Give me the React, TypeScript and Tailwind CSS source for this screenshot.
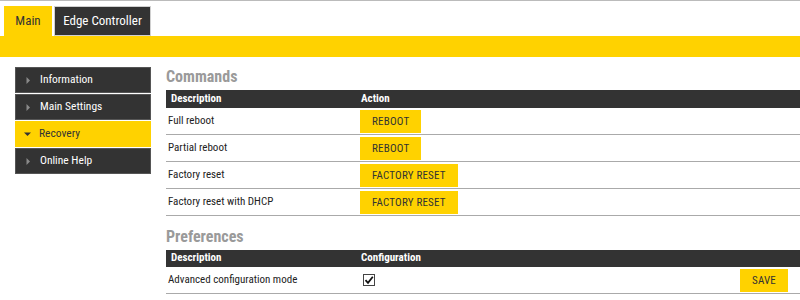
import { useState } from "react";

const font = { fontFamily: "'Roboto Condensed', Roboto, 'Liberation Sans', sans-serif" };

const menu = ["Information", "Main Settings", "Recovery", "Online Help"];

const commands = [
  { label: "Full reboot", action: "REBOOT" },
  { label: "Partial reboot", action: "REBOOT" },
  { label: "Factory reset", action: "FACTORY RESET" },
  { label: "Factory reset with DHCP", action: "FACTORY RESET" },
];

function Arrow({ open }: { open: boolean }) {
  return open ? (
    <svg width="7" height="7" viewBox="0 0 7 7" className="shrink-0">
      <path d="M0 1.5 L7 1.5 L3.5 5 Z" fill="#333" />
    </svg>
  ) : (
    <svg width="7" height="7" viewBox="0 0 7 7" className="shrink-0">
      <path d="M1.5 0 L5 3.5 L1.5 7 Z" fill="#8a8a8a" />
    </svg>
  );
}

function YellowButton({ children }: { children: React.ReactNode }) {
  return (
    <button className="h-[23px] px-[12px] bg-[#ffd200] text-[#333] text-[11px] tracking-[0.2px] leading-none">
      {children}
    </button>
  );
}

export default function App() {
  const [active, setActive] = useState("Recovery");
  const [advanced, setAdvanced] = useState(true);

  return (
    <div className="w-[800px] h-[300px] bg-white overflow-hidden border-t border-[#bbbbbb]" style={font}>
      {/* Tabs */}
      <div className="flex gap-[2px] pl-[4px] pt-[5px]">
        <div className="w-[48px] h-[30px] bg-[#ffd200] text-[#333] text-[13px] flex items-center justify-center">
          Main
        </div>
        <div className="w-[97px] h-[30px] bg-[#333333] border border-[#d0d0d0] text-white text-[13px] flex items-center justify-center">
          Edge Controller
        </div>
      </div>
      <div className="h-[21px] bg-[#ffd200]" />

      <div className="flex pt-[10px]">
        {/* Sidebar */}
        <div className="w-[136px] ml-[15px] flex flex-col gap-[1px] shrink-0">
          {menu.map((m) => {
            const on = m === active;
            return (
              <button
                key={m}
                onClick={() => setActive(m)}
                className={`h-[26px] flex items-center gap-[8px] text-left text-[11.5px] ${
                  on
                    ? "bg-[#ffd200] text-[#333] pl-[9px]"
                    : "bg-[#333333] text-white pl-[9px] border border-[#555]"
                }`}
              >
                <Arrow open={on} />
                <span>{m}</span>
              </button>
            );
          })}
        </div>

        {/* Content */}
        <div className="flex-1 ml-[15px]">
          <h2 className="text-[16px] font-bold text-[#9a9a9a] leading-[20px]">Commands</h2>
          <div className="mt-[3px]">
            <div className="flex h-[18px] items-center bg-[#333333] text-white text-[11px] font-bold">
              <div className="w-[195px] pl-[5px]">Description</div>
              <div>Action</div>
            </div>
            {commands.map((c) => (
              <div key={c.label} className="flex h-[27px] items-center border-b border-[#aaaaaa] text-[11px] text-[#222]">
                <div className="w-[194px] pl-[2px]">{c.label}</div>
                <YellowButton>{c.action}</YellowButton>
              </div>
            ))}
          </div>

          <h2 className="text-[16px] font-bold text-[#9a9a9a] leading-[20px] mt-[11px]">Preferences</h2>
          <div className="mt-[3px]">
            <div className="flex h-[17px] items-center bg-[#333333] text-white text-[11px] font-bold">
              <div className="w-[195px] pl-[5px]">Description</div>
              <div>Configuration</div>
            </div>
            <div className="flex h-[27px] items-center border-b border-[#aaaaaa] text-[11px] text-[#222] pr-[12px]">
              <div className="w-[197px] pl-[2px]">Advanced configuration mode</div>
              <button
                onClick={() => setAdvanced(!advanced)}
                className="w-[12px] h-[12px] border border-[#444] bg-white flex items-center justify-center"
              >
                {advanced && (
                  <svg width="10" height="10" viewBox="0 0 10 10">
                    <path d="M1.5 5.2 L4 7.8 L8.8 1.8" fill="none" stroke="#111" strokeWidth="1.8" />
                  </svg>
                )}
              </button>
              <div className="flex-1" />
              <YellowButton>SAVE</YellowButton>
            </div>
          </div>
        </div>
      </div>
    </div>
  );
}
